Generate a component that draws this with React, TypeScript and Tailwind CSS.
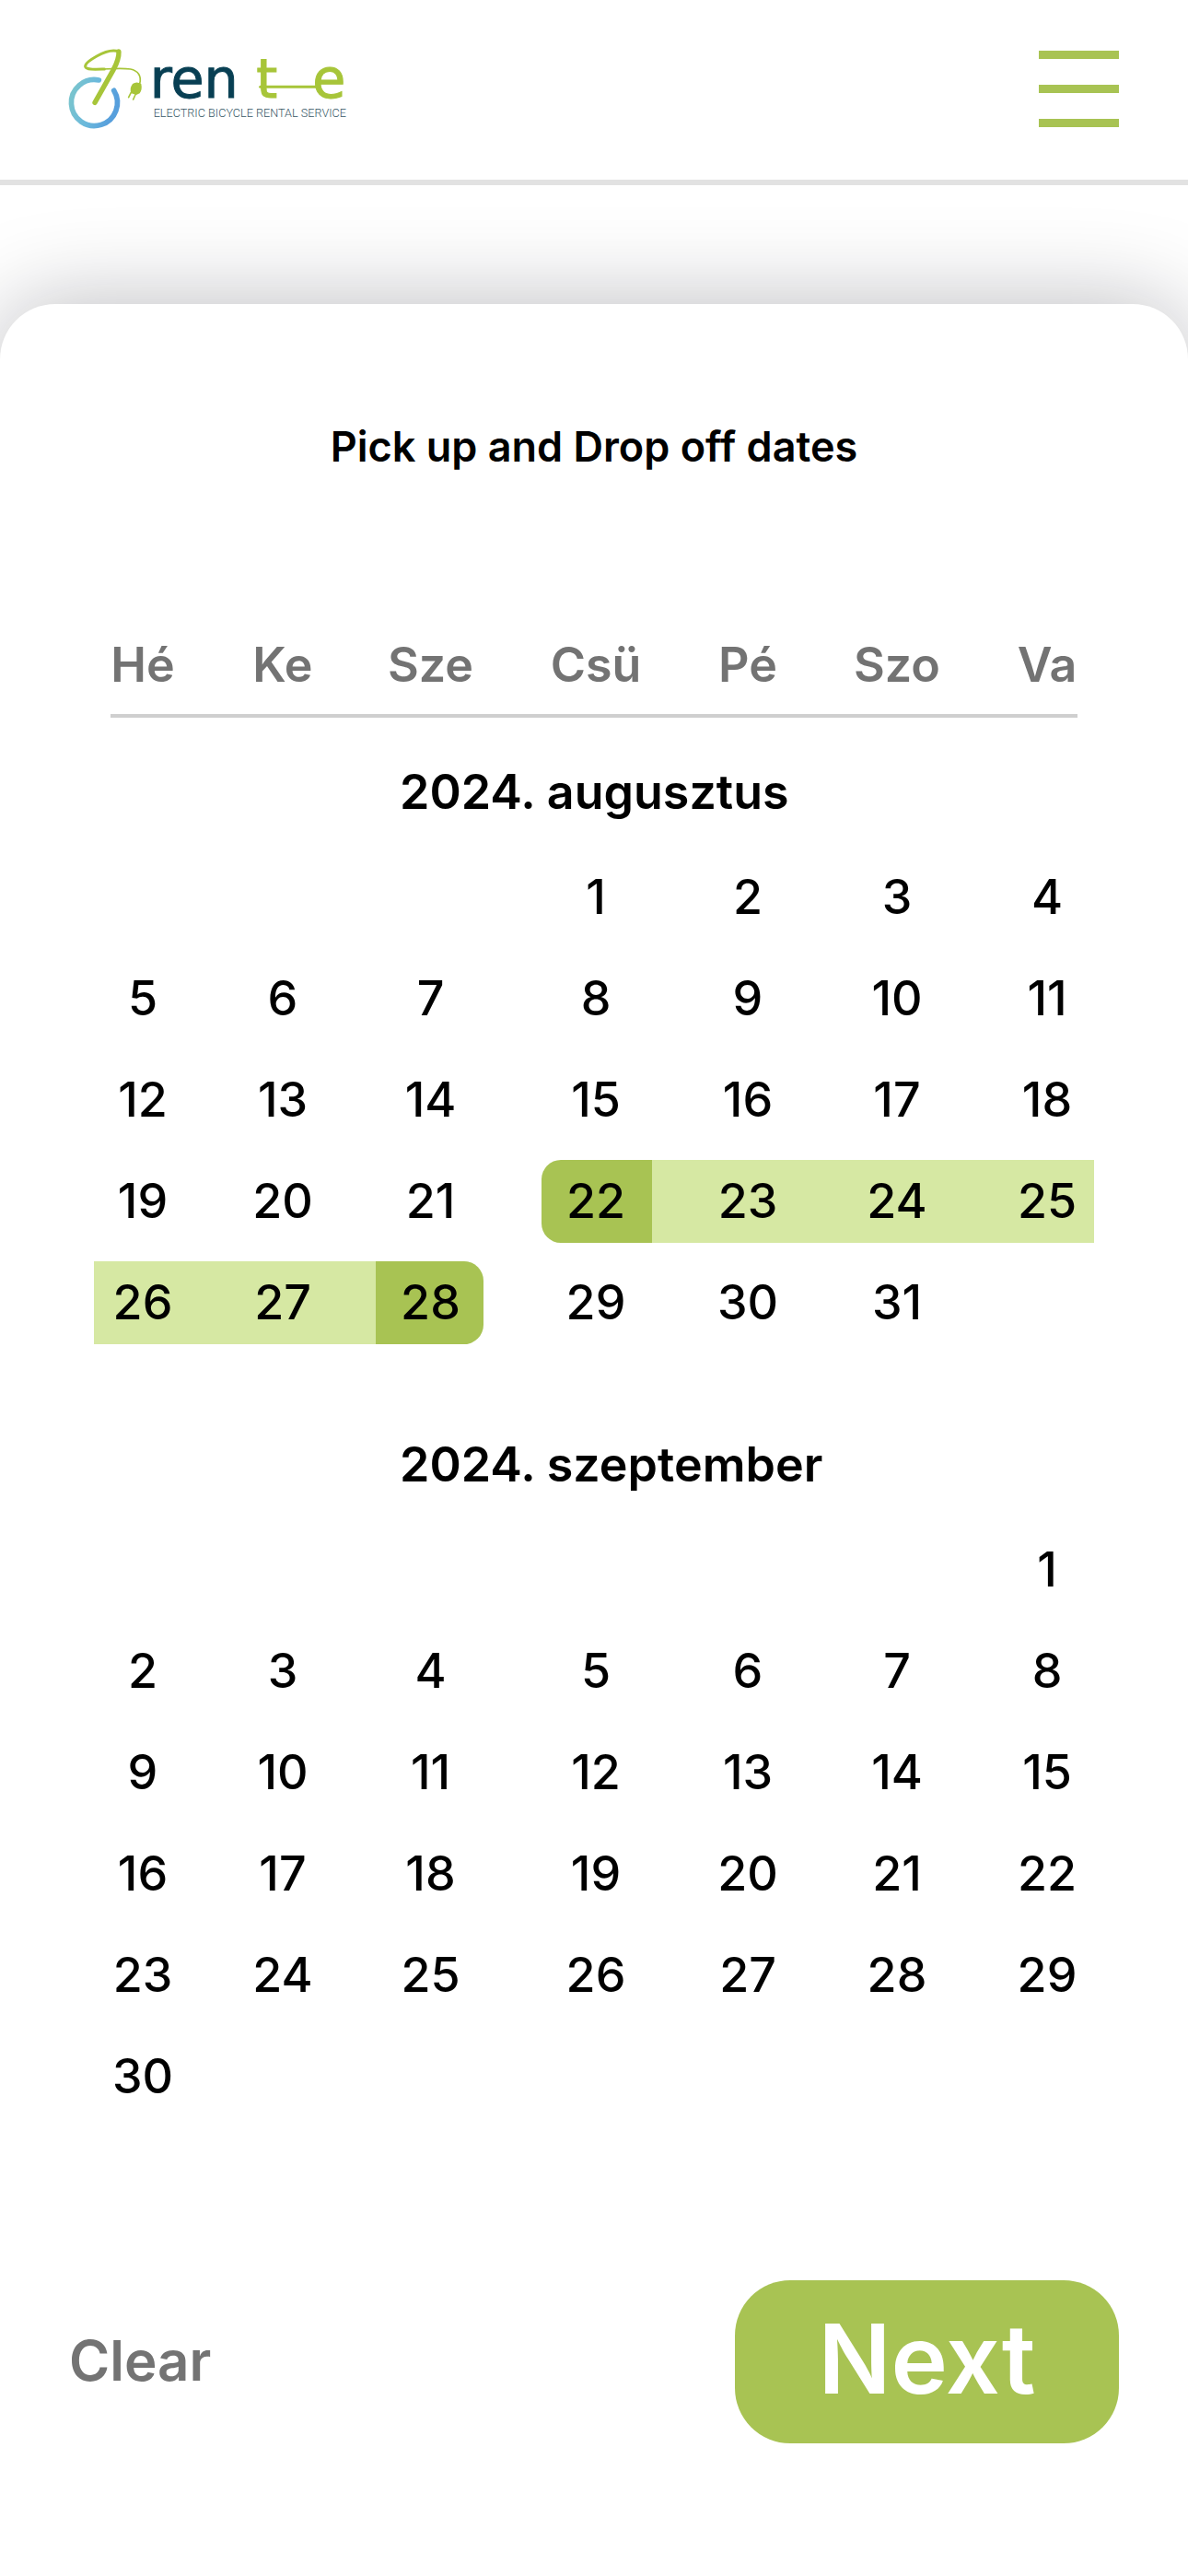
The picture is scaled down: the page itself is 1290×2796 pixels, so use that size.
import React from "react";

type Week = (number | null)[];

const weekdays = ["Hé", "Ke", "Sze", "Csü", "Pé", "Szo", "Va"];

const months: { name: string; top: string; weeks: Week[]; start?: number; end?: number }[] = [
  {
    name: "2024. augusztus",
    top: "pt-[22px]",
    start: 22,
    end: 28,
    weeks: [
      [null, null, null, 1, 2, 3, 4],
      [5, 6, 7, 8, 9, 10, 11],
      [12, 13, 14, 15, 16, 17, 18],
      [19, 20, 21, 22, 23, 24, 25],
      [26, 27, 28, 29, 30, 31, null],
    ],
  },
  {
    name: "2024. szeptember",
    top: "pt-[62px]",
    weeks: [
      [null, null, null, null, null, null, 1],
      [2, 3, 4, 5, 6, 7, 8],
      [9, 10, 11, 12, 13, 14, 15],
      [16, 17, 18, 19, 20, 21, 22],
      [23, 24, 25, 26, 27, 28, 29],
      [30, null, null, null, null, null, null],
    ],
  },
];

// Outer padding of a column's cell, and inner padding of its day button.
const cellPad = ["", "", "", "pl-[63px]", "", "", ""];
const dayPad = ["pl-[2px]", "", "pl-[2px]", "pr-[2px]", "", "", "pl-[54px]"];

function Logo() {
  return (
    <svg viewBox="0 0 990 330" className="h-[110px] w-[330px]" role="img" aria-label="rente electric bicycle rental service">
      <defs>
        <linearGradient id="wheel" x1="0" x2="1" y1="0" y2="0.3">
          <stop offset="0" stopColor="#7cc6cb" />
          <stop offset="0.55" stopColor="#6bb9dc" />
          <stop offset="1" stopColor="#579fdc" />
        </linearGradient>
      </defs>
      <path d="M142 141 A75 75 0 1 0 191 175" fill="none" stroke="url(#wheel)" strokeWidth="17" strokeLinecap="round" />
      <path d="M129 214 L190 106 Q208 72 207 48" fill="none" stroke="#a7c539" strokeWidth="16" strokeLinecap="round" strokeLinejoin="round" />
      <path d="M207 48 C186 40 158 50 135 63 C112 76 96 88 98 97 C101 108 130 106 160 105" fill="none" stroke="#a7c539" strokeWidth="9" strokeLinecap="round" />
      <path d="M155 105 C190 103 225 102 245 105 C270 110 282 128 275 153" fill="none" stroke="#a7c539" strokeWidth="5" strokeLinecap="round" />
      <path d="M252 153 Q265 144 280 153 Q284 172 275 184 L264 189 L248 184 Q240 170 252 153Z" fill="#a7c539" />
      <path d="M247 181 L239 197 M262 186 L254 204" fill="none" stroke="#a7c539" strokeWidth="5" strokeLinecap="round" />
      <g fontFamily="DejaVu Sans, sans-serif" fontSize="176" strokeWidth="3">
        <text x="308" y="199" fill="#083f53" stroke="#083f53">ren</text>
        <text x="655" y="199" fill="#a7c539" stroke="#a7c539">t</text>
        <text x="838" y="199" fill="#a7c539" stroke="#a7c539">e</text>
      </g>
      <path d="M668 163 H855" stroke="#a7c539" strokeWidth="9" strokeLinecap="round" />
      <text x="320" y="260" fill="#375766" fontFamily="Roboto, sans-serif" fontSize="38" fontWeight="300">
        ELECTRIC BICYCLE RENTAL SERVICE
      </text>
    </svg>
  );
}

export default function App() {
  return (
    <div className="flex min-h-screen flex-col bg-white font-['Inter',sans-serif] text-black">
      <header className="flex h-[201px] items-start justify-between border-b-[6px] border-[#e2e2e2] pt-10 pr-[75px] pl-[60px]">
        <a href="#home">
          <Logo />
        </a>
        <button type="button" aria-label="Menu" className="flex w-[87px] flex-col gap-7 pt-[15px]">
          <span className="h-[9px] w-full bg-[#a8c353]" />
          <span className="h-[9px] w-full bg-[#a8c353]" />
          <span className="h-[9px] w-full bg-[#a8c353]" />
        </button>
      </header>

      <main className="mt-[129px] flex grow flex-col rounded-t-[60px] bg-white pt-[127px] pb-36 shadow-[0_0_100px_rgba(10,12,24,0.28)]">
        <h1 className="text-center text-[45px] leading-[56px] font-semibold">Pick up and Drop off dates</h1>

        <div className="mt-[169px] px-[102px]">
          <table className="w-full table-fixed border-collapse text-[52px] leading-[64px]">
            <colgroup>
              <col className="w-[104px]" />
              <col className="w-[202px]" />
              <col className="w-[117px]" />
              <col className="w-[183px]" />
              <col className="w-[208px]" />
              <col className="w-[116px]" />
              <col className="w-[156px]" />
            </colgroup>
            <thead>
              <tr className="h-20 text-[#737373]">
                {weekdays.map((d, i) => (
                  <th key={d} scope="col" className={`p-0 font-semibold ${cellPad[i]}`}>
                    <div className={`flex justify-center ${dayPad[i]}`}>{d}</div>
                  </th>
                ))}
              </tr>
              <tr>
                <td colSpan={7} className="px-[18px] pt-[13px] pb-0">
                  <div className="h-1 bg-[#cfcfcf]" />
                </td>
              </tr>
            </thead>
            {months.map((m) => (
              <tbody key={m.name}>
                <tr>
                  <th colSpan={7} scope="colgroup" className={`px-0 pb-0 text-left font-semibold ${m.top}`}>
                    <div className="flex h-[118px] items-center pl-[332px]">{m.name}</div>
                  </th>
                </tr>
                {m.weeks.map((week, w) => (
                  <tr key={w} className="h-[110px]">
                    {week.map((day, i) => {
                      const edge = day !== null && (day === m.start || day === m.end);
                      const inside =
                        day !== null && m.start !== undefined && m.end !== undefined && day > m.start && day < m.end;
                      const fill = edge
                        ? day === m.start
                          ? "rounded-l-[21px] bg-[#a8c353]"
                          : "rounded-r-[21px] bg-[#a8c353]"
                        : inside
                          ? "bg-[#d6e8a3]"
                          : "";
                      return (
                        <td key={i} className={`p-0 ${cellPad[i]}`}>
                          {day !== null && (
                            <button
                              type="button"
                              aria-pressed={edge || inside}
                              className={`flex h-[90px] w-full items-center justify-center font-medium ${dayPad[i]} ${fill}`}
                            >
                              {day}
                            </button>
                          )}
                        </td>
                      );
                    })}
                  </tr>
                ))}
              </tbody>
            ))}
          </table>
        </div>

        <div className="mt-[166px] flex items-center justify-between px-[75px]">
          <button type="button" className="pb-1 text-[60px] leading-[72px] font-semibold text-[#737373]">
            Clear
          </button>
          <button
            type="button"
            className="flex h-[177px] w-[417px] items-center justify-center rounded-[60px] bg-[#a8c353] pb-2 text-[104px] leading-[120px] font-semibold text-white"
          >
            Next
          </button>
        </div>
      </main>
    </div>
  );
}
